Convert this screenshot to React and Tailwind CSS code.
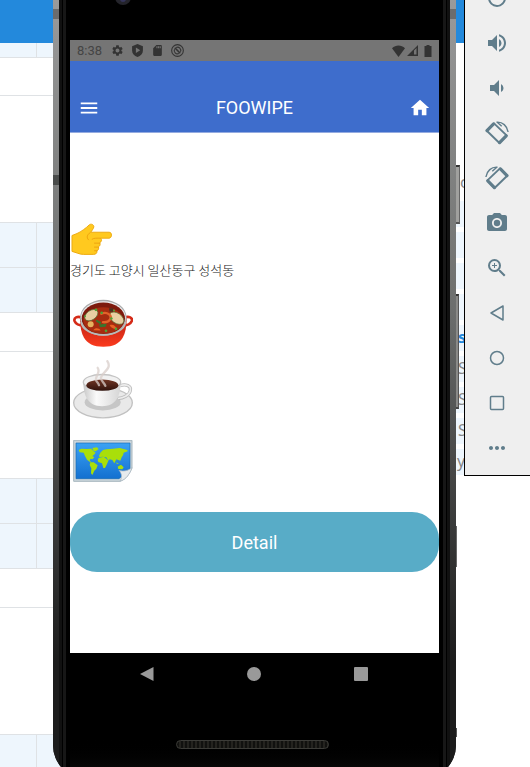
import React from "react";
import {
  MdBatteryFull,
  MdHome,
  MdMenu,
  MdMoreHoriz,
  MdPhotoCamera,
  MdPowerSettingsNew,
  MdSdCard,
  MdSettings,
  MdVolumeDown,
  MdVolumeUp,
  MdZoomIn,
} from "react-icons/md";

function RotateIcon({ flip }) {
  return (
    <svg viewBox="0 0 24 24" className={flip ? "size-6 -scale-x-100" : "size-6"} fill="none" stroke="currentColor">
      <path d="M9 2.4 1.8 9.8 14.4 22 21.6 14.4Z" strokeWidth="1.9" strokeLinejoin="round" />
      <path d="M2 9.6 8.6 2.9M14.6 21.6 21.2 14.8" strokeWidth="3.2" strokeLinecap="round" />
      <path d="M11.5 1.2c6-.6 10.8 3.8 11.6 9.8M12.5 1.4l4.2 3.8" strokeWidth="1.4" />
    </svg>
  );
}

function BackOutline() {
  return (
    <svg viewBox="0 0 24 24" className="size-6" fill="none" stroke="currentColor" strokeWidth="1.5" strokeLinejoin="round">
      <path d="M18 5v14L6 12Z" />
    </svg>
  );
}

function HomeOutline() {
  return (
    <svg viewBox="0 0 24 24" className="size-6" fill="none" stroke="currentColor" strokeWidth="1.5">
      <circle cx="12" cy="12" r="6.5" />
    </svg>
  );
}

function OverviewOutline() {
  return (
    <svg viewBox="0 0 24 24" className="size-6" fill="none" stroke="currentColor" strokeWidth="1.5">
      <rect x="5.5" y="5.5" width="13" height="13" rx="1" />
    </svg>
  );
}

const tools = [
  ["Power", <MdPowerSettingsNew size={24} />],
  ["Volume up", <MdVolumeUp size={24} />],
  ["Volume down", <MdVolumeDown size={24} />],
  ["Rotate left", <RotateIcon />],
  ["Rotate right", <RotateIcon flip />],
  ["Take screenshot", <MdPhotoCamera size={24} />],
  ["Zoom", <MdZoomIn size={24} />],
  ["Back", <BackOutline />],
  ["Home", <HomeOutline />],
  ["Overview", <OverviewOutline />],
  ["More", <MdMoreHoriz size={24} />],
];

function Toolbar() {
  return (
    <aside className="h-[476px] w-[66px] shrink-0 overflow-hidden border-b border-l border-black bg-[#efefef] text-[#607d8b]">
      <div className="-mt-[25px] flex flex-col pr-[2px]">
        {tools.map(([label, icon]) => (
          <button key={label} type="button" aria-label={label} className="flex h-[45px] items-center justify-center">
            {icon}
          </button>
        ))}
      </div>
    </aside>
  );
}

function Cells() {
  return (
    <div className="flex h-[45px] border-b border-[#dfe2e5] bg-[#eef6fd]">
      <div className="w-[37px] border-r border-[#dfe2e5]" />
    </div>
  );
}

function TableGroup() {
  return (
    <div>
      <Cells />
      <Cells />
      <div className="h-[39px] border-b border-[#dfe2e5]" />
      <div className="h-[127px] border-b border-[#dfe2e5]" />
    </div>
  );
}

const links = [
  ["c", "pl-1 text-[#888]", ""],
  ["", "", "bg-[#eef6fd]"],
  ["", "", "bg-[#eef6fd]"],
  ["", "", "bg-[#eef6fd]"],
  ["", "", "bg-[#eef6fd]"],
  ["s", "pl-[2px] font-bold text-[#2389dc]", "bg-[#eef6fd]"],
  ["S", "pl-[2px] text-[#888]", "bg-[#eef6fd]"],
  ["S", "pl-[2px] text-[#888]", "bg-[#eef6fd]"],
  ["S", "pl-[2px] text-[#888]", "bg-[#eef6fd]"],
  ["y", "pl-[1px] text-[#888]", "bg-[#eef6fd]"],
];

function PageBehind() {
  return (
    <div className="absolute inset-0 overflow-hidden bg-white">
      <div className="h-[43px] bg-[#2389dc]" />
      <div className="flex justify-between">
        <div className="w-[60px]">
          <div className="flex h-[15px] border-b border-[#dfe2e5] bg-[#eef6fd]">
            <div className="w-[37px] border-r border-[#dfe2e5]" />
          </div>
          <div className="h-[38px] border-b border-[#dfe2e5]" />
          <div className="h-[127px] border-b border-[#dfe2e5]" />
          <TableGroup />
          <TableGroup />
          <TableGroup />
        </div>
        <ul className="mt-[127px] flex w-[74px] flex-col gap-[5px] font-['Noto_Sans',sans-serif] text-[16px] leading-6">
          {links.map(([text, tone, fill], i) => (
            <li key={i} className={fill + " h-[26px] overflow-hidden"}>
              <span className={tone}>{text}</span>
            </li>
          ))}
        </ul>
      </div>
    </div>
  );
}

function Rim({ side }) {
  return (
    <div className={side === "right" ? "flex w-[17px] shrink-0 flex-row-reverse" : "flex w-[17px] shrink-0"}>
      <div className="flex w-[6px] flex-col bg-linear-to-b from-[#9a9a9a] via-[#6c6e6d] via-40% to-[#1c1c1c] to-85%">
        <div className="mt-[9px] h-[10px] bg-[#6c6c6c]" />
        <div className={side === "right" ? "hidden" : "mt-[156px] h-[10px] bg-[#4a4c4b]"} />
      </div>
      <div className="w-[3px] bg-[#111]" />
      <div className="w-[1px] bg-black" />
      <div className="w-[3px] bg-[#171717]" />
      <div className="flex-1 bg-black" />
    </div>
  );
}

function Hand() {
  return (
    <svg viewBox="34 24 124 98" className="h-[33px] w-[41px]" role="img" aria-label="Pointing hand">
      <path
        d="M37 61 52 55C64 50 80 38 89 29c5-5 15-1 14 6-1 6-7 12-9 16h55c11 0 9 18 0 18h-25c4 5 3 11-3 13 2 6 1 11-4 13 2 5 0 11-5 12 2 7-3 11-10 11H72c-13 0-23-6-35-9Z"
        fill="#ffc91f"
        stroke="#edaa12"
        strokeWidth="3"
        strokeLinejoin="round"
      />
      <path d="M98 72c5-4 15-3 25-3M105 84h16M105 96h12M105 107h8M92 52c-10 7-12 15-5 22" fill="none" stroke="#e99b0b" strokeWidth="2.5" strokeLinecap="round" />
    </svg>
  );
}

function Pot() {
  return (
    <svg viewBox="40 252 180 146" className="h-[49px] w-[60px]" role="img" aria-label="Pot of food">
      <defs>
        <linearGradient id="pot" x1="0" y1="0" x2="0" y2="1">
          <stop offset="0.4" stopColor="#d52b18" />
          <stop offset="1" stopColor="#fb3b1d" />
        </linearGradient>
      </defs>
      <path d="M66 307c-12-5-25 0-21 11 4 9 15 13 27 13M195 307c12-5 25 0 21 11-4 9-15 13-27 13" fill="none" stroke="#d52b18" strokeWidth="8" />
      <path d="M61 310c0 24 4 44 12 58 10 17 28 27 58 27s48-10 58-27c8-14 12-34 12-58Z" fill="url(#pot)" />
      <ellipse cx="131" cy="308" rx="70" ry="54" fill="#a9aaab" />
      <ellipse cx="131" cy="307" rx="67" ry="49" fill="#eceded" />
      <ellipse cx="131" cy="310" rx="65" ry="48" fill="#7d1a0d" />
      <ellipse cx="131" cy="316" rx="60" ry="40" fill="#a62c10" />
      <path d="M64 320c8 52 126 52 134 0" fill="none" stroke="#b8bbb9" strokeWidth="5" />
      <ellipse cx="95" cy="300" rx="22" ry="14" transform="rotate(-35 95 300)" fill="#e8cfa2" stroke="#537036" strokeWidth="2" />
      <ellipse cx="171" cy="309" rx="24" ry="15" transform="rotate(35 171 309)" fill="#e8cfa2" stroke="#537036" strokeWidth="2" />
      <path d="M125 296c17-9 34 6 26 17-4 7-12 9-21 8" fill="none" stroke="#e2622a" strokeWidth="7" strokeLinecap="round" />
      <circle cx="93" cy="327" r="9" fill="#e6b25e" />
      <path d="M101 345c5-8 17-8 22 1ZM150 330c10-4 18 3 22 11-9 1-17-2-22-11Z" fill="#e86224" />
      <path d="m110 313 15 8-3 6-13-8ZM118 328l23-2-3 9-17 1Z" fill="#38752e" />
      <path d="M148 279h12v11h-10Z" fill="#4b3020" />
      <g fill="#4da338">
        <circle cx="109" cy="284" r="4" />
        <circle cx="126" cy="293" r="4" />
        <circle cx="76" cy="303" r="3" />
        <circle cx="163" cy="286" r="3" />
        <circle cx="155" cy="310" r="4" />
        <circle cx="139" cy="347" r="4" />
        <circle cx="169" cy="341" r="4" />
      </g>
    </svg>
  );
}

function Coffee() {
  return (
    <svg viewBox="40 32 180 176" className="h-[59px] w-[60px]" role="img" aria-label="Hot coffee">
      <defs>
        <linearGradient id="cup" x1="0" y1="0" x2="1" y2="0">
          <stop offset="0" stopColor="#c9c9c9" />
          <stop offset="0.35" stopColor="#fafafa" />
          <stop offset="1" stopColor="#d5d5d5" />
        </linearGradient>
        <linearGradient id="brew" x1="0" y1="0" x2="0" y2="1">
          <stop offset="0" stopColor="#703524" />
          <stop offset="1" stopColor="#30130d" />
        </linearGradient>
      </defs>
      <ellipse cx="130" cy="160" rx="88" ry="45" fill="#e9e9e9" stroke="#c1c1c1" strokeWidth="4" />
      <ellipse cx="129" cy="158" rx="54" ry="25" fill="#c6c6c6" />
      <path d="M181 109c17-7 34 0 31 14-3 15-22 23-37 24" fill="none" stroke="#bcbcbc" strokeWidth="10" />
      <path d="M181 109c17-7 34 0 31 14-3 15-22 23-37 24" fill="none" stroke="#ededed" strokeWidth="5" />
      <path d="M71 96c0 45 15 74 56 74s56-29 56-74Z" fill="url(#cup)" />
      <ellipse cx="127" cy="98" rx="56" ry="23" fill="#f1f1f1" stroke="#c4c4c4" strokeWidth="4" />
      <ellipse cx="128" cy="107" rx="48" ry="17" fill="url(#brew)" />
      <path d="M143 35c15 23-14 31-19 49-2 9 9 14 13 25M114 55c10 14-8 25-5 36 1 7 7 7 9 16" fill="none" stroke="#d8cdca" strokeOpacity="0.75" strokeWidth="7" strokeLinecap="round" />
    </svg>
  );
}

function WorldMap() {
  return (
    <svg viewBox="40 270 180 126" className="h-[42px] w-[60px]" role="img" aria-label="World map">
      <defs>
        <linearGradient id="sea" x1="0" y1="0" x2="0" y2="1">
          <stop offset="0" stopColor="#3ba2f4" />
          <stop offset="1" stopColor="#1370d0" />
        </linearGradient>
      </defs>
      <path d="M42 271h175v83c-7 17-17 33-35 40H42Z" fill="#c9d4da" stroke="#a8b7bf" strokeWidth="3" />
      <path d="M49 279h162v78l-33 29H49Z" fill="url(#sea)" stroke="#1769b3" strokeWidth="2" />
      <g fill="#a9df0a">
        <path d="m57 300 8-4 15 1 15-1 5 6 8 6-5 6-5 4 6 4-6 6-5-2-3 5 4 5 6 2-8-1-10-8-6-11-4-10-12-1Z" />
        <path d="m98 294 14-2 5 5-9 7-6-1ZM92 337l10 0 12 9-4 10-6 6-6 13-4-5 1-15-5-10Z" />
        <path d="m117 324 15-4 8 6 6 6-4 10-6 12h-5l-4-14-11-4-2-6Z" />
        <path d="m118 318 4-10 8-8 10-2 20-2 20-2 23 6 1 4-12 4-2 8-4 6-4 10-6-2-6-2-6 12-6-10-8-2-4 4-6-10-12-2-8 2Z" />
        <path d="m174 350 10-6 8 8-4 6-12-1ZM170 337l8 5-7-1Z" />
      </g>
      <path d="M178 361c15 5 28 0 39-8-5 16-19 38-36 40 7-9 6-22-3-32Z" fill="#e7ebed" stroke="#a5b4be" strokeWidth="2" />
      <path d="M219 356v40h-35c18-7 28-23 35-40Z" fill="#fff" />
    </svg>
  );
}

function StatusBar() {
  return (
    <div className="flex h-[21px] items-center bg-[#757575] px-[7px] text-[#333]">
      <span className="text-[13px] leading-[21px] text-[#444]">8:38</span>
      <div className="ml-[9px] flex items-center gap-[7px]">
        <MdSettings size={13} />
        <svg viewBox="0 0 24 24" className="size-[13px]" fill="currentColor">
          <path fillRule="evenodd" d="M12 0 2 4v8c0 6 4 10 10 12 6-2 10-6 10-12V4ZM9 6.5l8 5-8 5Z" />
        </svg>
        <MdSdCard size={13} />
        <svg viewBox="0 0 24 24" className="size-[13px]" fill="none" stroke="currentColor" strokeWidth="2">
          <circle cx="12" cy="12" r="10.8" />
          <path d="M6.5 9.5a6 6 0 0 0 8 8M9.500 6.500a6 6 0 0 1 8 8" />
          <path d="m7 7 10 10" strokeWidth="3" />
        </svg>
      </div>
      <div className="ml-auto flex items-center gap-[2px]">
        <svg viewBox="0 0 24 22" className="h-[12px] w-[13px]" fill="currentColor">
          <path d="M12 22 0 6C7-1 17-1 24 6Z" />
        </svg>
        <svg viewBox="0 0 22 22" className="mr-[4px] size-[11px]" fill="currentColor">
          <path fillRule="evenodd" d="M0 22 22 0v22ZM14 11v8h5V6Z" />
        </svg>
        <svg viewBox="0 0 8 12" className="h-3 w-2" fill="currentColor">
          <path d="M2.500 0h3v1H7.500v11H.5V1h2Z" />
        </svg>
      </div>
    </div>
  );
}

function Screen() {
  return (
    <div className="min-w-0 flex-1 bg-black">
      <div className="flex h-10 items-start pl-[45px]">
        <svg viewBox="0 0 16 8" className="h-2 w-4">
          <circle cx="8" cy="-3" r="8" fill="#24242b" />
          <circle cx="8" cy="-1" r="3" fill="#34345b" />
        </svg>
      </div>
      <div className="bg-white">
        <StatusBar />
        <header className="flex h-[72px] items-end justify-between border-b border-[#94abe0] bg-[#3e6dcc] px-[7px] pb-3 text-white">
          <button type="button" aria-label="Open menu" className="flex size-6 items-center justify-center">
            <MdMenu size={22} />
          </button>
          <h1 className="text-[18px] leading-6">FOOWIPE</h1>
          <button type="button" aria-label="Home" className="flex size-6 items-center justify-center">
            <MdHome size={22} />
          </button>
        </header>
        <main className="flex flex-col items-start pt-[90px] pb-[81px]">
          <div className="pl-[1px]">
            <Hand />
          </div>
          <p className="mt-1 font-['Noto_Sans_CJK_KR',sans-serif] text-[13px] leading-5 font-light text-[#222]">경기도 고양시 일산동구 성석동</p>
          <div className="mt-[19px] flex flex-col pl-[3px]">
            <Pot />
            <div className="mt-3">
              <Coffee />
            </div>
            <div className="mt-[21px]">
              <WorldMap />
            </div>
          </div>
          <button type="button" className="mt-[30px] h-[60px] w-full rounded-[27px] bg-[#58acc7] pt-[2px] text-[18px] leading-6 text-white">
            Detail
          </button>
        </main>
      </div>
      <nav className="grid h-[42px] grid-cols-3 items-center justify-items-center pr-[25px] pl-[23px] text-[#999]">
        <button type="button" aria-label="Back">
          <svg viewBox="0 0 14 14" className="size-[14px]" fill="currentColor">
            <path d="M13.5 0v14L0 7Z" />
          </svg>
        </button>
        <button type="button" aria-label="Home" className="size-[14px] rounded-full bg-[#999]" />
        <button type="button" aria-label="Recent apps" className="size-[14px] rounded-[1px] bg-[#999]" />
      </nav>
      <div className="flex h-[84px] justify-center bg-linear-to-b from-black from-50% to-[#111] pt-[45px] pr-1">
        <div className="h-[9px] w-[153px] rounded-full border border-[#3c3c38] bg-[repeating-linear-gradient(90deg,#11110f_0_2px,#24231f_2px_4px)]" />
      </div>
    </div>
  );
}

function Phone() {
  return (
    <div className="relative min-w-0 flex-1">
      <div className="flex overflow-hidden rounded-b-[34px] bg-black">
        <Rim side="left" />
        <Screen />
        <Rim side="right" />
      </div>
      <div className="absolute top-[165px] left-full h-[59px] w-1 border-y-2 border-r border-t-[#333] border-r-[#666] border-b-[#555] bg-[#a0a09e]" />
      <div className="absolute top-[294px] left-full h-[115px] w-[3px] border-y-2 border-r border-t-[#333] border-r-[#555] border-b-[#444] bg-[#8a8a88]" />
      <div className="absolute top-[526px] left-full h-[41px] w-px bg-[#666]" />
      <div className="absolute top-[728px] left-full h-[9px] w-px bg-[#555]" />
    </div>
  );
}

export default function App() {
  return (
    <div className="relative h-screen overflow-hidden font-[Roboto,sans-serif]">
      <PageBehind />
      <div className="relative flex items-start gap-2 pl-[53px]">
        <Phone />
        <Toolbar />
      </div>
    </div>
  );
}
